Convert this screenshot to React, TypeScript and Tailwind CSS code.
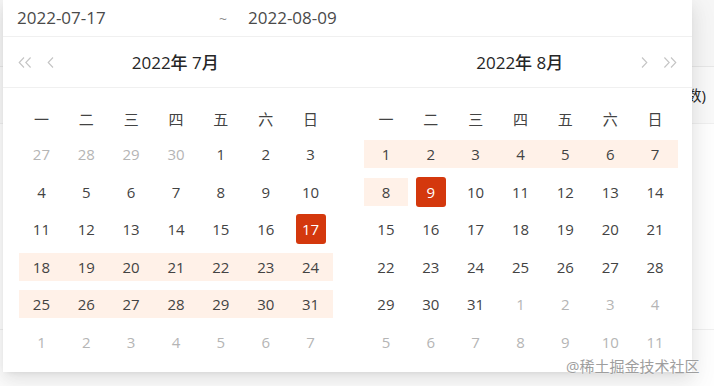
import React from "react";

type Cell = { day: number; inMonth: boolean; key: string };

const WEEKDAYS = ["一", "二", "三", "四", "五", "六", "日"];

// range: 2022-07-17 ~ 2022-08-09
const START = "7-17";
const END = "8-9";

function buildMonth(month: number, lead: number[], days: number, trailTo: number): Cell[] {
  const cells: Cell[] = [];
  lead.forEach((d) => cells.push({ day: d, inMonth: false, key: `${month - 1}-${d}` }));
  for (let d = 1; d <= days; d++) cells.push({ day: d, inMonth: true, key: `${month}-${d}` });
  let n = 1;
  while (cells.length < trailTo) {
    cells.push({ day: n, inMonth: false, key: `${month + 1}-${n}` });
    n++;
  }
  return cells;
}

function cmp(key: string) {
  const [m, d] = key.split("-").map(Number);
  return m * 100 + d;
}

function DayCell({ cell }: { cell: Cell }) {
  const v = cmp(cell.key);
  const selected = cell.inMonth && (cell.key === START || cell.key === END);
  const inRange = cell.inMonth && v > cmp(START) && v < cmp(END);

  let inner = "flex h-[28px] w-full items-center justify-center";
  if (selected) inner = "flex h-[30px] w-[30px] items-center justify-center rounded-[3px] bg-[#d4380d] text-white";
  else if (inRange) inner = "flex h-[28px] w-full items-center justify-center bg-[#fff1e8]";

  const color = selected ? "" : cell.inMonth ? "text-[#434343]" : "text-[#b5b5b5]";

  return (
    <div className="flex h-[37.5px] items-center justify-center">
      <div className={`${inner} ${color}`}>{cell.day}</div>
    </div>
  );
}

function Chevron({ double, right }: { double?: boolean; right?: boolean }) {
  const w = double ? 14 : 7;
  const d = double
    ? "M6 0.5 L1.2 5.5 L6 10.5 M12.6 0.5 L7.8 5.5 L12.6 10.5"
    : "M6 0.5 L1.2 5.5 L6 10.5";
  return (
    <svg width={w} height="11" viewBox={`0 0 ${w} 11`} className={right ? "-scale-x-100" : ""}>
      <path d={d} fill="none" stroke="#c4c4c4" strokeWidth="1.1" />
    </svg>
  );
}

function Panel({ title, cells, side }: { title: string; cells: Cell[]; side: "left" | "right" }) {
  return (
    <div className="flex flex-col">
      <div className="flex h-[51px] items-center border-b border-[#f0f0f0] px-[15px]">
        <div className="flex w-[40px] items-center gap-[15px]">
          {side === "left" && (
            <>
              <Chevron double />
              <Chevron />
            </>
          )}
        </div>
        <div className="flex-1 pt-[2px] text-center text-[17px] font-medium text-[#262626]">{title}</div>
        <div className="flex w-[40px] items-center justify-end gap-[15px]">
          {side === "right" && (
            <>
              <Chevron right />
              <Chevron double right />
            </>
          )}
        </div>
      </div>
      <div className="pt-[14px] pb-[11px] pl-4">
        <div className="w-[314px]">
          <div className="grid h-[33.5px] grid-cols-7 items-center text-center text-[15px] text-[#434343]">
            {WEEKDAYS.map((w) => (
              <div key={w}>{w}</div>
            ))}
          </div>
          <div className="grid grid-cols-7 text-[15px]">
            {cells.map((c) => (
              <DayCell key={c.key} cell={c} />
            ))}
          </div>
        </div>
      </div>
    </div>
  );
}

export default function App() {
  const july = buildMonth(7, [27, 28, 29, 30], 31, 42);
  const august = buildMonth(8, [], 31, 42);

  return (
    <div
      className="relative h-[386px] w-[714px] overflow-hidden bg-white"
      style={{ fontFamily: '"Open Sans", "Noto Sans CJK SC", sans-serif' }}
    >
      {/* page behind the popup */}
      <div className="flex flex-col">
        <div className="h-[67px] border-b border-[#e8e8e8] bg-[#f7f7f7]" />
        <div className="flex h-[57px] items-center justify-end border-b border-[#f0f0f0] bg-[#fafafa] pr-[8px] text-[15px] text-[#262626]">
          入住时长(天数)
        </div>
        <div className="h-[206px] border-b border-[#f0f0f0]" />
      </div>

      {/* range picker popup */}
      <div className="absolute top-0 left-[3px] w-[689px] bg-white shadow-[0_6px_16px_0_rgba(0,0,0,0.08),0_3px_6px_-4px_rgba(0,0,0,0.12),0_9px_28px_8px_rgba(0,0,0,0.05)]">
        <div className="flex h-[37px] items-center border-b border-[#f0f0f0] pl-[14px] text-[17px] text-[#4a4a4a]">
          <span className="w-[198px]">2022-07-17</span>
          <span className="w-[16px] text-center text-[14px] text-[#8c8c8c]">~</span>
          <span className="ml-[17px]">2022-08-09</span>
        </div>
        <div className="grid grid-cols-2">
          <Panel title="2022年 7月" cells={july} side="left" />
          <Panel title="2022年 8月" cells={august} side="right" />
        </div>
      </div>

      {/* watermark */}
      <div className="absolute top-[355px] left-[566px] text-[15px] text-[#9e9e9e] [text-shadow:0_0_2px_#fff]">
        @稀土掘金技术社区
      </div>
    </div>
  );
}
